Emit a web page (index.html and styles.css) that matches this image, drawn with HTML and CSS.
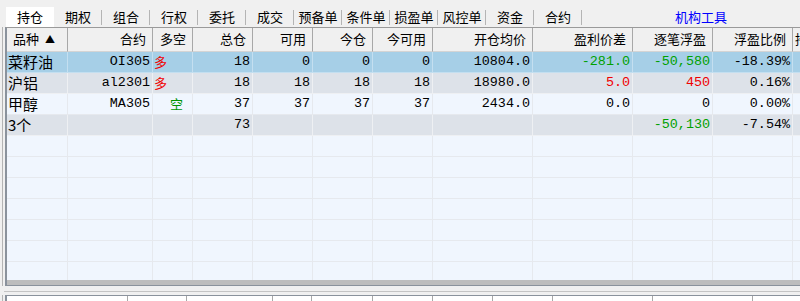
FILE: index.html
```html
<!DOCTYPE html>
<html lang="zh">
<head>
  <meta charset="UTF-8">
  <title>持仓</title>
  <link rel="stylesheet" href="styles.css">
</head>
<body>
  <!-- 标签栏 -->
  <div class="tabs">
    <div class="tab active">持仓</div>
    <div class="tab">期权</div>
    <div class="tab">组合</div>
    <div class="tab">行权</div>
    <div class="tab">委托</div>
    <div class="tab">成交</div>
    <div class="tab">预备单</div>
    <div class="tab">条件单</div>
    <div class="tab">损盈单</div>
    <div class="tab">风控单</div>
    <div class="tab">资金</div>
    <div class="tab last">合约</div>
    <div class="tools">机构工具</div>
  </div>

  <div class="frame">
    <div class="grid">
      <div class="row head">
        <div class="cell left">品种 <span class="sort">▲</span></div>
        <div class="cell">合约</div>
        <div class="cell">多空</div>
        <div class="cell">总仓</div>
        <div class="cell">可用</div>
        <div class="cell">今仓</div>
        <div class="cell">今可用</div>
        <div class="cell">开仓均价</div>
        <div class="cell">盈利价差</div>
        <div class="cell">逐笔浮盈</div>
        <div class="cell">浮盈比例</div>
        <div class="cell left cut">持仓盈亏</div>
      </div>

      <div class="row sel">
        <div class="cell name">菜籽油</div>
        <div class="cell">OI305</div>
        <div class="cell dir up">多</div>
        <div class="cell">18</div>
        <div class="cell">0</div>
        <div class="cell">0</div>
        <div class="cell">0</div>
        <div class="cell">10804.0</div>
        <div class="cell green">-281.0</div>
        <div class="cell green">-50,580</div>
        <div class="cell">-18.39%</div>
        <div class="cell"></div>
      </div>
      <div class="row odd">
        <div class="cell name">沪铝</div>
        <div class="cell">al2301</div>
        <div class="cell dir up">多</div>
        <div class="cell">18</div>
        <div class="cell">18</div>
        <div class="cell">18</div>
        <div class="cell">18</div>
        <div class="cell">18980.0</div>
        <div class="cell red">5.0</div>
        <div class="cell red">450</div>
        <div class="cell">0.16%</div>
        <div class="cell"></div>
      </div>
      <div class="row">
        <div class="cell name">甲醇</div>
        <div class="cell">MA305</div>
        <div class="cell dir down">空</div>
        <div class="cell">37</div>
        <div class="cell">37</div>
        <div class="cell">37</div>
        <div class="cell">37</div>
        <div class="cell">2434.0</div>
        <div class="cell">0.0</div>
        <div class="cell">0</div>
        <div class="cell">0.00%</div>
        <div class="cell"></div>
      </div>
      <div class="row odd">
        <div class="cell name">3个</div>
        <div class="cell"></div>
        <div class="cell"></div>
        <div class="cell">73</div>
        <div class="cell"></div>
        <div class="cell"></div>
        <div class="cell"></div>
        <div class="cell"></div>
        <div class="cell"></div>
        <div class="cell green">-50,130</div>
        <div class="cell">-7.54%</div>
        <div class="cell"></div>
      </div>

      <div class="row empty"><div class="cell"></div><div class="cell"></div><div class="cell"></div><div class="cell"></div><div class="cell"></div><div class="cell"></div><div class="cell"></div><div class="cell"></div><div class="cell"></div><div class="cell"></div><div class="cell"></div><div class="cell"></div></div>
      <div class="row empty"><div class="cell"></div><div class="cell"></div><div class="cell"></div><div class="cell"></div><div class="cell"></div><div class="cell"></div><div class="cell"></div><div class="cell"></div><div class="cell"></div><div class="cell"></div><div class="cell"></div><div class="cell"></div></div>
      <div class="row empty"><div class="cell"></div><div class="cell"></div><div class="cell"></div><div class="cell"></div><div class="cell"></div><div class="cell"></div><div class="cell"></div><div class="cell"></div><div class="cell"></div><div class="cell"></div><div class="cell"></div><div class="cell"></div></div>
      <div class="row empty"><div class="cell"></div><div class="cell"></div><div class="cell"></div><div class="cell"></div><div class="cell"></div><div class="cell"></div><div class="cell"></div><div class="cell"></div><div class="cell"></div><div class="cell"></div><div class="cell"></div><div class="cell"></div></div>
      <div class="row empty"><div class="cell"></div><div class="cell"></div><div class="cell"></div><div class="cell"></div><div class="cell"></div><div class="cell"></div><div class="cell"></div><div class="cell"></div><div class="cell"></div><div class="cell"></div><div class="cell"></div><div class="cell"></div></div>
      <div class="row empty"><div class="cell"></div><div class="cell"></div><div class="cell"></div><div class="cell"></div><div class="cell"></div><div class="cell"></div><div class="cell"></div><div class="cell"></div><div class="cell"></div><div class="cell"></div><div class="cell"></div><div class="cell"></div></div>
      <div class="row empty last"><div class="cell"></div><div class="cell"></div><div class="cell"></div><div class="cell"></div><div class="cell"></div><div class="cell"></div><div class="cell"></div><div class="cell"></div><div class="cell"></div><div class="cell"></div><div class="cell"></div><div class="cell"></div></div>

      <div class="hscroll"></div>
    </div>
  </div>

  <!-- 分隔条 -->
  <div class="splitter"></div>

  <!-- 下方面板 -->
  <div class="frame lower">
    <div class="grid">
      <div class="row sub">
        <div class="cell"></div><div class="cell"></div><div class="cell"></div><div class="cell"></div><div class="cell"></div><div class="cell"></div><div class="cell"></div><div class="cell"></div><div class="cell"></div><div class="cell"></div><div class="cell"></div>
      </div>
    </div>
  </div>
</body>
</html>
```

FILE: styles.css
```css
/* 基础 */
* {
  box-sizing: border-box;
  margin: 0;
  padding: 0;
}
body {
  width: 800px;
  height: 301px;
  overflow: hidden;
  background: #f0f0f0;
  font-family: "Noto Sans CJK SC", sans-serif;
  color: #000;
}

/* 标签栏 */
.tabs {
  display: flex;
  height: 27px;
  padding: 7px 0 0 6px;
  font-size: 13px;
}
.tab {
  width: 48px;
  height: 20px;
  line-height: 19px;
  text-align: center;
  position: relative;
}
.tab::after {
  content: "";
  position: absolute;
  right: 0;
  top: 3px;
  height: 15px;
  border-right: 1px solid #b4b4b4;
}
.tab.active {
  background: #fff;
}
.tab.active::after {
  display: none;
}
.tools {
  flex: 1;
  text-align: center;
  padding-left: 20px;
  line-height: 19px;
  color: #0000ff;
}

/* 外框 */
.frame {
  margin-left: 2px;
  border-left: 1px solid #b4b4b4;
  padding-left: 2px;
}
.grid {
  border-top: 1px solid #9a9a9a;
  border-left: 2px solid #8a929c;
  border-bottom: 1px solid #8a929c;
  background: #f0f6fe;
  overflow: hidden;
}

/* 行 */
.row {
  display: grid;
  grid-template-columns: 61px 85px 40px 60px 60px 60px 60px 100px 100px 80px 80px 60px;
  height: 21px;
  background: #f0f6fe;
}
.cell {
  border-right: 1px solid #e6e9ee;
  border-bottom: 1px solid #e6e9ee;
  text-align: right;
  padding-right: 2px;
  font-family: "Liberation Mono", "Noto Sans CJK SC", monospace;
  font-size: 13.4px;
  line-height: 20px;
  white-space: nowrap;
  overflow: hidden;
}
.row.sel {
  background: #a6cfe7;
}
.row.sel .cell {
  border-color: #c4dff0;
}
.row.odd {
  background: #dde2e9;
}
.row.odd .cell {
  border-color: #eef0f3;
}
.row.empty.last {
  height: 18px;
}
.row.empty.last .cell {
  border-bottom: none;
}

/* 表头 */
.row.head {
  height: 24px;
  background: #f0f0f0;
}
.row.head .cell {
  font-family: "Noto Sans CJK SC", sans-serif;
  font-size: 13px;
  line-height: 22px;
  padding-right: 6px;
  border-right: 1px solid #a8a8a8;
  border-bottom: 1px solid #d4d4d4;
}
.row.head .cell.left {
  text-align: left;
  padding-left: 6px;
}
.row.head .cell.cut {
  padding-left: 2px;
  border-right: none;
}
.sort {
  font-size: 10px;
  margin-left: 3px;
  vertical-align: 1px;
}

/* 单元格内容 */
.cell.name {
  text-align: left;
  padding-left: 1px;
  font-family: "Noto Sans CJK SC", sans-serif;
  font-size: 15px;
}
.cell.dir {
  font-family: "Noto Sans CJK SC", sans-serif;
  font-size: 13px;
  text-align: left;
}
.cell.up {
  color: #f00000;
  padding-left: 1px;
}
.cell.down {
  color: #009400;
  padding-left: 17px;
}
.green {
  color: #00a000;
}
.red {
  color: #f00000;
}

/* 横向滚动条 */
.hscroll {
  height: 5px;
  background: #bdbdbd;
}

/* 分隔条 */
.splitter {
  margin-left: 4px;
  border-bottom: 1px solid #c4c4c4;
  height: 6px;
  margin-bottom: 3px;
}

/* 下方面板 */
.frame.lower .grid {
  border-top: 1px solid #8a929c;
  border-bottom: none;
  background: #fff;
}
.row.sub {
  grid-template-columns: 121px 59px 86px 39px 61px 60px 60px 60px 100px 100px 94px;
  background: #fff;
}
.row.sub .cell {
  border-right: 1px solid #a8a8a8;
  border-bottom: none;
}
```
